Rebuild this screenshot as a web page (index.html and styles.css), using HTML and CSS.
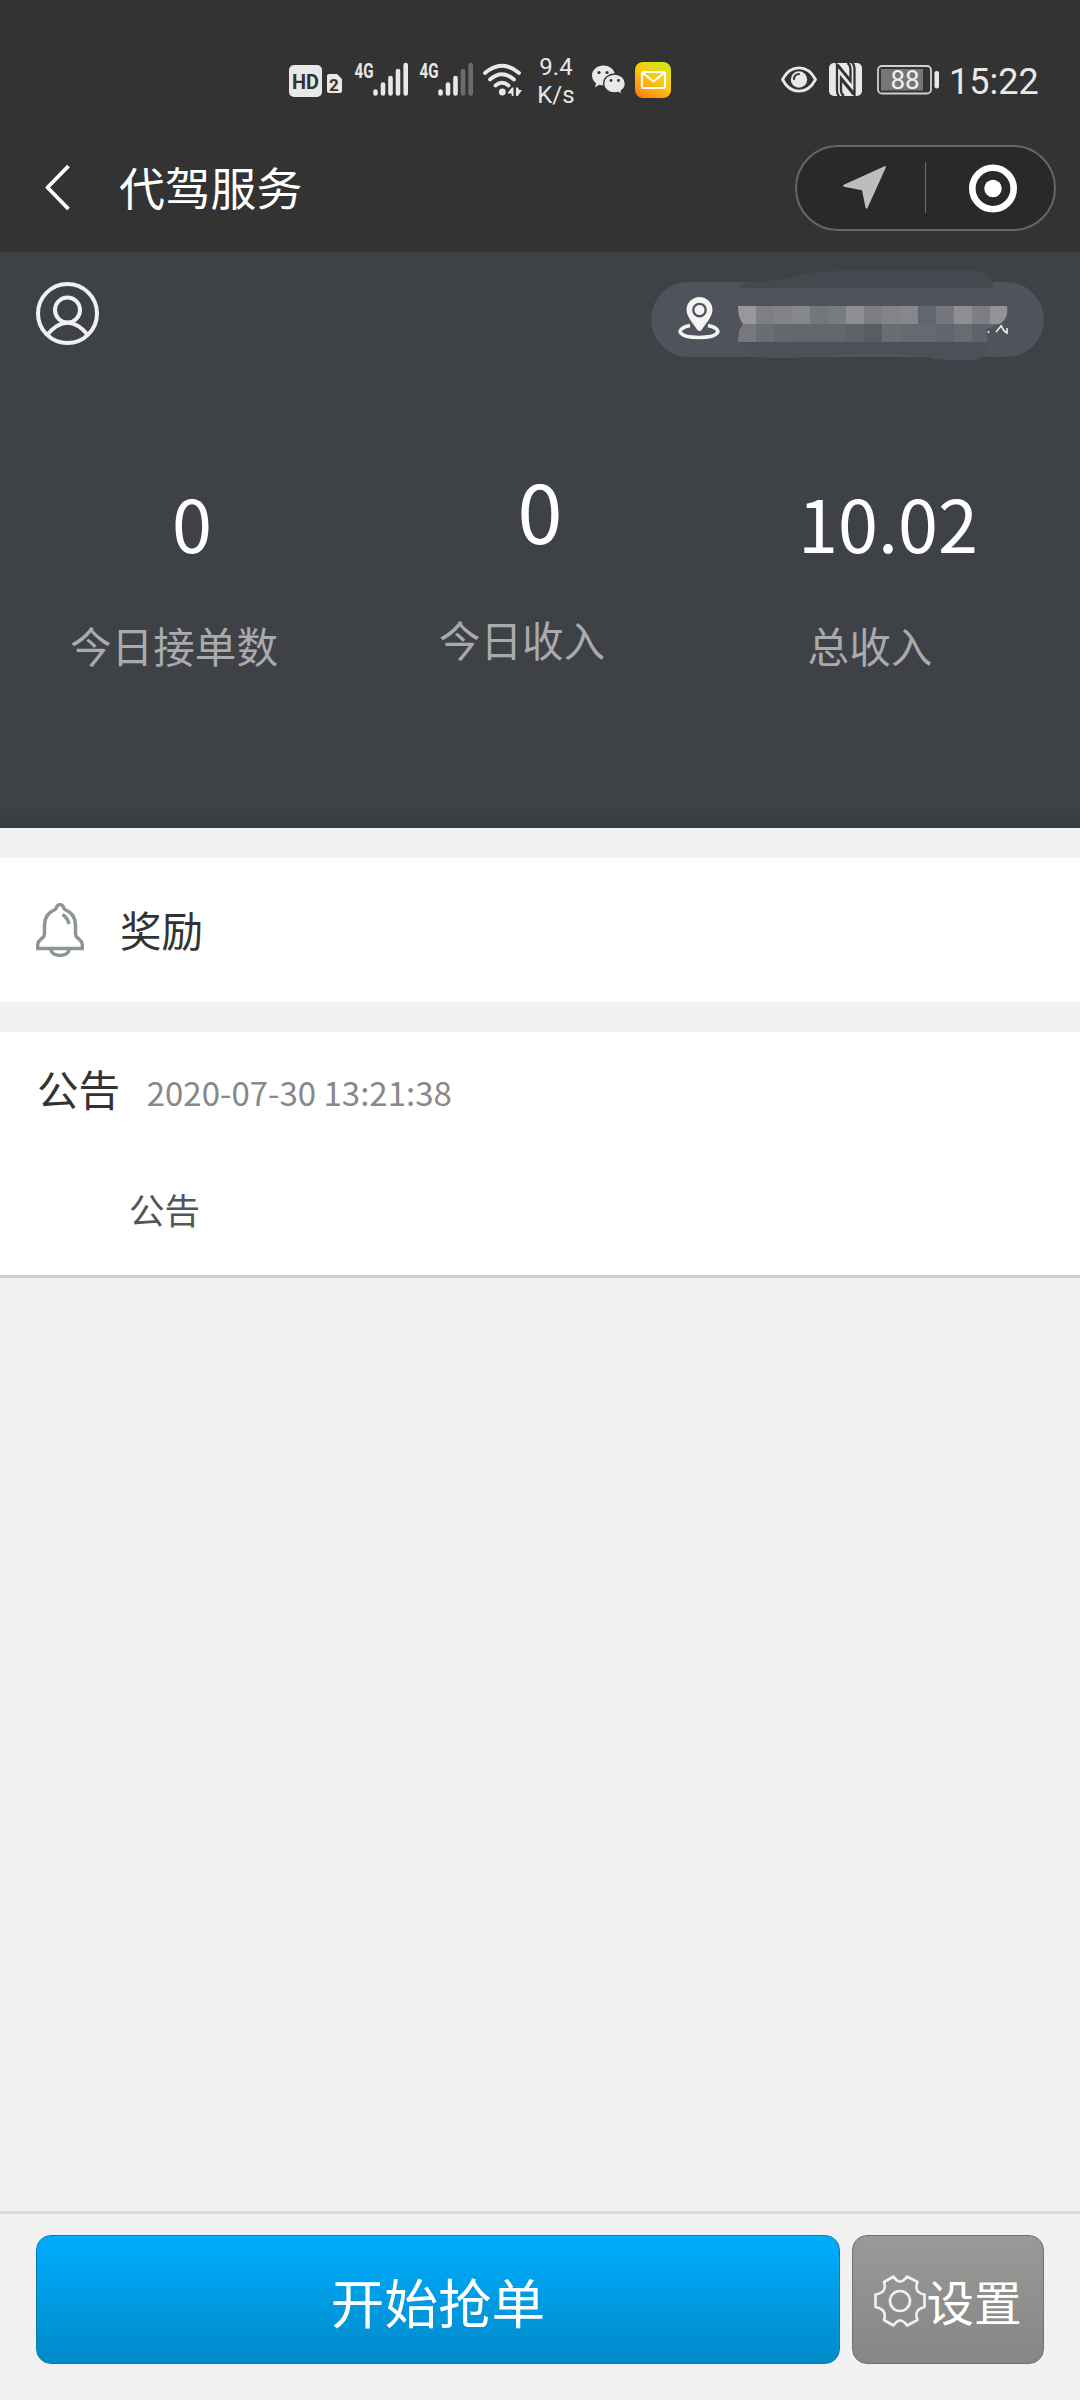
FILE: index.html
```html
<!DOCTYPE html>
<html lang="zh-CN">
<head>
<meta charset="utf-8">
<title>代驾服务</title>
<link rel="stylesheet" href="styles.css">
</head>
<body>
<div class="app">
  <header class="top">
    <div class="status">
      <div class="status-left">
        <svg class="ic-hd" width="54" height="36" viewBox="288 62 54 36">
          <rect x="289" y="65" width="33" height="32" rx="5" fill="#e8e8e8"/>
          <text x="305.500" y="88.500" text-anchor="middle" class="t-hd" textLength="27" lengthAdjust="spacingAndGlyphs">HD</text>
          <path d="M329 74h8l5 5v12a2 2 0 0 1-2 2h-11a2 2 0 0 1-2-2v-15a2 2 0 0 1 2-2z" fill="#e8e8e8"/>
          <text x="334" y="91" text-anchor="middle" class="t-two">2</text>
        </svg>
        <svg class="ic-sig" width="60" height="48" viewBox="350 56 60 48">
          <text x="354.500" y="77.500" class="t-4g" textLength="19" lengthAdjust="spacingAndGlyphs">4G</text>
          <g stroke="#e8e8e8" stroke-width="4.600" stroke-linecap="round"><path d="M375.500 91.500v2M383 84.500v9M390.500 78v15.500M398 71v22.500M405.700 65v28.500"/></g>
        </svg>
        <svg class="ic-sig" width="60" height="48" viewBox="350 56 60 48">
          <text x="354.500" y="77.500" class="t-4g" textLength="19" lengthAdjust="spacingAndGlyphs">4G</text>
          <g stroke="#e8e8e8" stroke-width="4.600" stroke-linecap="round"><path d="M375.500 91.500v2M383 84.500v9M390.500 78v15.500"/><path stroke="#6b6b6b" d="M398 71v22.500M405.700 65v28.500"/></g>
        </svg>
        <svg class="ic-wifi" width="42" height="36" viewBox="482 62 42 36">
          <g fill="none" stroke="#e8e8e8" stroke-width="3.800" stroke-linecap="round"><path d="M485 73q17-14.500 34 0M490 79.500q12-10.500 24 0M495.500 85.500q6.500-5.500 13 0"/></g>
          <circle cx="502.300" cy="92" r="3.400" fill="#e8e8e8"/>
          <path d="M508 92.500l4-5h1.500V96h-1.800v-2.500H508zM516 87.500h1.800l1.500 2.500h2.700l-4.200 6H516z" fill="#e8e8e8"/>
        </svg>
        <div class="speed"><span>9.4</span><span>K/s</span></div>
        <svg class="ic-wechat" width="36" height="36" viewBox="591 62 36 36">
          <path d="M603.500 65.500c-6.500 0-11.500 4.500-11.500 10 0 3.200 1.600 5.800 4.200 7.700l-1.300 4 4.600-2.400c1.300.4 2.600.6 4 .6 6.500 0 11.500-4.500 11.500-9.900 0-5.500-5-10-11.500-10z" fill="#e8e8e8"/>
          <path d="M614.600 74c-6 0-11 4.200-11 9.500s5 9.500 11 9.500c1.300 0 2.600-.2 3.700-.5l3.800 2-1-3.400c2.500-1.800 4.200-4.500 4.200-7.600 0-5.300-4.700-9.500-10.700-9.500z" fill="#e8e8e8" stroke="#333" stroke-width="1.300"/>
          <g fill="#333"><circle cx="599" cy="72.500" r="1.600"/><circle cx="607" cy="72.500" r="1.600"/><circle cx="611" cy="80.500" r="1.400"/><circle cx="618.500" cy="80.500" r="1.400"/></g>
        </svg>
        <svg class="ic-mail" width="36" height="36" viewBox="0 0 36 36">
          <defs><linearGradient id="mail" x1="0.200" y1="1" x2="0.800" y2="0"><stop offset="0" stop-color="#ff7f11"/><stop offset=".5" stop-color="#ffc40c"/><stop offset="1" stop-color="#d3ea14"/></linearGradient></defs>
          <rect width="36" height="36" rx="8" fill="url(#mail)"/>
          <g fill="none" stroke="#fff" stroke-width="2.200" stroke-linejoin="round"><rect x="7" y="10" width="23" height="16" rx="2"/><path d="M8 11l10.500 8.500L29 11"/></g>
        </svg>
      </div>
      <div class="status-right">
        <svg class="ic-eye" width="38" height="36" viewBox="780 62 38 36">
          <path d="M782.500 79.500c8-15.500 25-15.500 33 0-8 15.500-25 15.500-33 0z" fill="none" stroke="#e8e8e8" stroke-width="2.800"/>
          <circle cx="799" cy="79.500" r="8.200" fill="#e8e8e8"/><path d="M794 79a5 5 0 0 1 5-5" fill="none" stroke="#333" stroke-width="2.200" stroke-linecap="round"/>
        </svg>
        <svg class="ic-nfc" width="34" height="36" viewBox="829 62 34 36">
          <rect x="829" y="63" width="33" height="33" rx="5" fill="#e8e8e8"/>
          <g fill="none" stroke="#333" stroke-width="2.300">
            <path d="M839 96.500q-2-2.500-2-6V65L850.500 81V69q0-4-3-6"/>
            <path d="M852 62.500q2.500 2.500 2.500 6V94L841 78v12q0 4 3 6"/>
          </g>
          <path d="M836 63l3 1.500 11.500 14v4zM841 77l14 16v3l-2.500-1L841 81z" fill="#333"/>
        </svg>
        <svg class="ic-bat" width="64" height="36" viewBox="876 62 64 36">
          <rect x="878" y="66" width="53" height="27.500" rx="4" fill="none" stroke="#d0d0d0" stroke-width="1.800"/>
          <rect x="881" y="69" width="42" height="21.500" fill="#777"/>
          <rect x="934.500" y="71" width="4.500" height="17.500" rx="2" fill="#e8e8e8"/>
          <text x="905" y="89" text-anchor="middle" class="t-bat">88</text>
        </svg>
        <span class="clock">15:22</span>
      </div>
    </div>
    <div class="nav">
      <svg class="back" width="28" height="48" viewBox="44 163 28 48"><path d="M68.500 166L47.500 187.500L68.500 209" fill="none" stroke="#fff" stroke-width="3.800" stroke-linejoin="round"/></svg>
      <h1>代驾服务</h1>
      <div class="capsule">
        <svg width="257" height="82" viewBox="797 147 257 82">
          <path d="M884.500 166.300q2-.8 1.200 1.500L867.500 208q-1.200 1.500-2-.5L862 190.200 843.800 186.800q-1.500-1 0-2z" fill="#bdbdbd"/>
          <path d="M925.500 162v51" stroke="#666" stroke-width="1.200"/>
          <circle cx="993" cy="188.500" r="20.700" fill="none" stroke="#fff" stroke-width="6.600"/><circle cx="993" cy="188.500" r="8.700" fill="#fff"/>
        </svg>
      </div>
    </div>
  </header>

  <section class="summary">
    <div class="tools">
      <svg width="64" height="64" viewBox="0 0 64 64" fill="none" stroke="#f1f1f1" stroke-width="4">
        <circle cx="31.500" cy="31.500" r="29.500"/><circle cx="31.500" cy="28" r="12.500"/><path d="M11 53q20.500-24.500 41 0"/>
      </svg>
      <div class="place">
        <svg class="pin" width="42" height="43" viewBox="0 0 42 43">
          <path d="M12 28.500C-4 32 0 40.500 21 40.500s25-8.500 9-12" fill="none" stroke="#f4f4f4" stroke-width="3.600"/>
          <path fill-rule="evenodd" d="M21.500 0A13 13 0 0 0 8.500 13c0 7 8 15 10.500 19.500q2.500 3 5 0C26.500 28 34.500 20 34.500 13a13 13 0 0 0-13-13zm0 5.700a7.400 7.400 0 1 1 0 14.800 7.400 7.400 0 0 1 0-14.800z" fill="#f4f4f4"/><circle cx="21.500" cy="13.100" r="5" fill="#f4f4f4"/>
        </svg>
        <svg class="mask" width="272" height="92" viewBox="737 269 272 92">
          <defs><clipPath id="brush"><path d="M738 306h269q2 12-7 18l-14 5 1 13H738l1-11 4-7q-5-6-5-18z"/></clipPath></defs>
          <path d="M738 288q6-6 15-6 22 0 52-8 18-4 90-4h80q18 3 18 18z" fill="#45484f"/>
          <path d="M738 342h249q2 12-10 18h-27q-16 0-26-4-42-5-92-1-18 1-36 3h-24q-25 0-34-16z" fill="#4d5059"/>
          <path d="M988 333l1-2M996 332l5-6M1001 325q2 6 6 8v-5" fill="none" stroke="#eee" stroke-width="1.600"/>
          <g clip-path="url(#brush)">
            <path fill="#98989c" d="M738 306h18v18h-18z"/><path fill="#7e7f84" d="M756 306h18v18h-18z"/><path fill="#828387" d="M774 306h18v18h-18z"/><path fill="#86878b" d="M792 306h18v18h-18z"/><path fill="#73767b" d="M810 306h18v18h-18z"/><path fill="#787b80" d="M828 306h18v18h-18z"/><path fill="#8e8f93" d="M846 306h18v18h-18z"/><path fill="#7d7e83" d="M864 306h18v18h-18z"/><path fill="#838488" d="M882 306h18v18h-18z"/><path fill="#86878b" d="M900 306h18v18h-18z"/><path fill="#63666e" d="M918 306h18v18h-18z"/><path fill="#75777c" d="M936 306h18v18h-18z"/><path fill="#8e8f93" d="M954 306h18v18h-18z"/><path fill="#7c7e83" d="M972 306h18v18h-18z"/><path fill="#929397" d="M990 306h18v18h-18z"/>
            <path fill="#77787d" d="M738 324h18v18h-18z"/><path fill="#6a6d72" d="M756 324h18v18h-18z"/><path fill="#65686e" d="M774 324h18v18h-18z"/><path fill="#63666d" d="M792 324h54v18h-54z"/><path fill="#5f6269" d="M846 324h18v18h-18z"/><path fill="#595c63" d="M864 324h18v18h-18z"/><path fill="#6a6d71" d="M882 324h18v18h-18z"/><path fill="#666970" d="M900 324h36v18h-36z"/><path fill="#62656d" d="M936 324h18v18h-18z"/><path fill="#686b71" d="M954 324h18v18h-18z"/><path fill="#60636c" d="M972 324h36v18h-36z"/>
          </g>
        </svg>
      </div>
    </div>
    <div class="stats">
      <div class="stat"><b>0</b><span>今日接单数</span></div>
      <div class="stat main"><b>0</b><span>今日收入</span></div>
      <div class="stat"><b>10.02</b><span>总收入</span></div>
    </div>
  </section>

  <section class="reward">
    <svg width="48" height="54" viewBox="0 0 48 54" fill="none" stroke="#8b9496" stroke-width="3.500">
      <path d="M1.700 45.500V42C1.700 36 8.500 36 8.500 31V22C8.500 13 13 9 19 6.500 21 5.500 20 1.600 24 1.600S27 5.500 29 6.500C35 9 39.500 13 39.500 22v9c0 5 6.800 5 6.800 11v3.500z"/><path d="M15 46c0 8.500 18 8.500 18 0"/><path d="M26.500 11.500q5 3 6.500 9.500"/>
    </svg>
    <span>奖励</span>
  </section>

  <section class="notice">
    <div class="notice-head"><h2>公告</h2><time>2020-07-30 13:21:38</time></div>
    <p>公告</p>
  </section>

  <footer class="actions">
    <button class="btn start">开始抢单</button>
    <button class="btn settings">
      <svg width="52" height="52" viewBox="0 0 52 52" fill="none" stroke="#f1f1f1" stroke-width="2.600" stroke-linejoin="round">
        <path d="M19.500 1.500L10 7Q13.500 17.500 1.500 19.500V32Q13.500 34.500 10 45l9.500 5.500Q26 40.500 33 50.500L43.500 45Q39.500 34.500 50.500 32V19.500Q39.500 17.500 43.500 7L33 1.500Q26 11.500 19.500 1.500z"/><circle cx="26" cy="26" r="10"/>
      </svg>
      <span>设置</span>
    </button>
  </footer>
</div>
</body>
</html>
```
FILE: styles.css
```css
* { box-sizing: border-box; }
body { margin: 0; background: #f1f1f1; font-family: "Noto Sans CJK SC", sans-serif; }
svg { display: block; flex: none; }
h1, h2, p { margin: 0; font-weight: 400; }

.app { width: 1080px; height: 2400px; display: flex; flex-direction: column; overflow: hidden; }

.top { height: 252px; background: #333; }
.status { height: 124px; padding: 36px 42px 0 288px; display: flex; justify-content: space-between; align-items: center; font-family: Roboto, sans-serif; color: #e8e8e8; }
.status-left, .status-right { height: 88px; display: flex; align-items: center; }
.ic-hd { margin-right: 8px; }
.ic-sig { margin-right: 5px; }
.ic-wifi { margin-left: 2px; }
.speed { width: 60px; margin: 2px 0 0 2px; display: flex; flex-direction: column; align-items: center; font-size: 24px; line-height: 28px; }
.ic-wechat { margin: 0 8px 0 5px; }
.ic-nfc { margin: 0 13px 0 11px; }
.clock { width: 89px; margin: 3px 0 0 9px; font-size: 36px; line-height: 42px; }
.t-hd { font: 700 21px Roboto, sans-serif; fill: #333; }
.t-two { font: 700 17px Roboto, sans-serif; fill: #333; }
.t-4g { font: 700 20px Roboto, sans-serif; fill: #e8e8e8; }
.t-bat { font: 400 26px Roboto, sans-serif; fill: #f1f1f1; }

.nav { height: 128px; padding: 0 24px 0 44px; display: flex; align-items: center; }
.back { margin: -2px 47px 0 0; }
.nav h1 { margin-top: -4px; color: #fff; font-size: 45.8px; line-height: 60px; }
.capsule { width: 261px; height: 86px; margin-left: auto; border: 2px solid #666; border-radius: 43px; background: #292929; }

.summary { height: 576px; padding-top: 30px; background: linear-gradient(#3e4146 96%, #393c40); }
.tools { height: 75px; padding: 0 36px; display: flex; justify-content: space-between; }
.place { width: 393px; height: 75px; padding: 15px 0 0 27px; border-radius: 37.5px; background: #50535b; display: flex; align-items: flex-start; }
.mask { margin: -28px 0 0 17px; }
.stats { padding: 93px 18px 0; display: grid; grid-template-columns: repeat(3, 348px); }
.stat { padding-top: 22px; display: flex; flex-direction: column; align-items: center; }
.stat b { color: #fff; font-size: 72px; font-weight: 400; line-height: 100px; }
.stat span { margin-top: 43px; padding-right: 36px; color: #aaa; font-size: 41.6px; line-height: 60px; }
.stat.main { padding-top: 5px; }
.stat.main b { font-size: 81px; line-height: 108px; }
.stat.main span { margin-top: 46px; }

.reward { height: 144px; margin: 30px 0; padding: 0 36px; background: #fff; display: flex; align-items: center; gap: 36px; color: #333; font-size: 41.6px; }
.reward span { margin-top: -3px; }
.notice { height: 246px; padding: 25px 37px; background: #fff; border-bottom: 3px solid #d0d0d0; }
.notice-head { display: flex; align-items: baseline; gap: 26.5px; line-height: 62px; }
.notice h2 { color: #333; font-size: 41.6px; }
.notice time { color: #888; font-size: 33px; }
.notice p { margin-top: 59px; padding-left: 92px; color: #555; font-size: 35.6px; line-height: 54px; }

.actions { height: 189px; margin-top: auto; padding: 21px 36px 36px; border-top: 3px solid #dcdcdc; display: flex; gap: 12px; align-items: flex-start; }
.btn { height: 129px; padding: 2px 0 0; border-radius: 15px; color: #fff; font-family: inherit; display: flex; align-items: center; justify-content: center; }
.start { width: 804px; border: 1.5px solid #127aa8; background: linear-gradient(#00adff, #008ac8); font-size: 53.6px; }
.settings { width: 192px; border: 1.5px solid #707070; background: linear-gradient(#999997, #868686); font-size: 47.6px; }
```
